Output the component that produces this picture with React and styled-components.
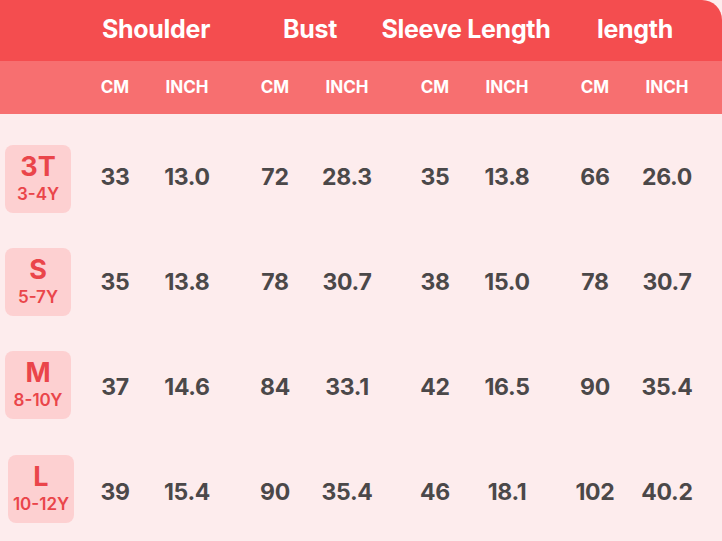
import React from "react";
import styled, { createGlobalStyle } from "styled-components";

const rows = [
  { size: "3T", age: "3-4Y", values: ["33", "13.0", "72", "28.3", "35", "13.8", "66", "26.0"] },
  { size: "S", age: "5-7Y", values: ["35", "13.8", "78", "30.7", "38", "15.0", "78", "30.7"] },
  { size: "M", age: "8-10Y", values: ["37", "14.6", "84", "33.1", "42", "16.5", "90", "35.4"] },
  { size: "L", age: "10-12Y", values: ["39", "15.4", "90", "35.4", "46", "18.1", "102", "40.2"] },
];

// title text sits a little off the group centre in the original
const groups = [
  { name: "Shoulder", nudge: 5 },
  { name: "Bust", nudge: -1 },
  { name: "Sleeve Length", nudge: -5 },
  { name: "length", nudge: 4 },
];

const GlobalStyle = createGlobalStyle`
  html, body {
    margin: 0;
    padding: 0;
    background: #ffffff;
  }
  body {
    font-family: "Inter", "Open Sans", sans-serif;
    overflow: hidden;
  }
`;

const cols = "71px repeat(4, 8px 72px 72px 8px) 11px";

const Chart = styled.div`
  width: 722px;
  height: 541px;
  background: #fdeced;
  overflow: hidden;
`;

const TitleBar = styled.div`
  display: grid;
  grid-template-columns: 71px repeat(4, 160px) 11px;
  height: 61px;
  align-items: center;
  background: #f44d4f;
  border-top-right-radius: 20px;
`;

const Title = styled.div`
  grid-column: ${(p) => p.col};
  justify-self: center;
  white-space: nowrap;
  color: #ffffff;
  font-size: 25px;
  font-weight: 700;
  letter-spacing: -0.3px;
  padding-bottom: 4px;
  padding-left: ${(p) => (p.$nudge > 0 ? p.$nudge * 2 : 0)}px;
  padding-right: ${(p) => (p.$nudge < 0 ? -p.$nudge * 2 : 0)}px;
`;

const UnitBar = styled.div`
  display: grid;
  grid-template-columns: ${cols};
  height: 53px;
  align-items: center;
  background: #f76f70;
`;

const Unit = styled.div`
  grid-column: ${(p) => p.col};
  text-align: center;
  color: #ffffff;
  font-size: 17px;
  font-weight: 700;
  padding-bottom: 2px;
`;

const Body = styled.div`
  padding-top: 10px;
`;

const Row = styled.div`
  display: grid;
  grid-template-columns: ${cols};
  height: 105px;
  align-items: center;
`;

const Badge = styled.div`
  grid-column: 1;
  justify-self: start;
  margin-left: ${(p) => (p.$wide ? "8px" : "5px")};
  margin-top: ${(p) => p.$shift}px;
  min-width: 66px;
  height: 68px;
  box-sizing: border-box;
  padding: 0 3px;
  border-radius: 8px;
  background: #fdd0d1;
  color: #ea454a;
  display: flex;
  flex-direction: column;
  align-items: center;
  justify-content: center;
  font-weight: 700;
`;

const Size = styled.div`
  font-size: 27px;
  line-height: 30px;
`;

const Age = styled.div`
  font-size: 17px;
  line-height: 24px;
  font-weight: 600;
`;

const Value = styled.div`
  grid-column: ${(p) => p.col};
  text-align: center;
  color: #4b4849;
  font-size: 23px;
  font-weight: 700;
  letter-spacing: -0.3px;
`;

const colFor = (i) => 2 + Math.floor(i / 2) * 4 + 1 + (i % 2);

const shifts = [4, 0, -3, -6];

export default function App() {
  return (
    <>
      <GlobalStyle />
      <Chart>
        <TitleBar>
          {groups.map((g, i) => (
            <Title key={g.name} col={i + 2} $nudge={g.nudge}>
              {g.name}
            </Title>
          ))}
        </TitleBar>
        <UnitBar>
          {groups.map((g, i) => (
            <React.Fragment key={g.name}>
              <Unit col={colFor(i * 2)}>CM</Unit>
              <Unit col={colFor(i * 2 + 1)}>INCH</Unit>
            </React.Fragment>
          ))}
        </UnitBar>
        <Body>
          {rows.map((r, ri) => (
            <Row key={r.size}>
              <Badge $shift={shifts[ri]} $wide={r.age.length > 5}>
                <Size>{r.size}</Size>
                <Age>{r.age}</Age>
              </Badge>
              {r.values.map((v, i) => (
                <Value key={i} col={colFor(i)}>
                  {v}
                </Value>
              ))}
            </Row>
          ))}
        </Body>
      </Chart>
    </>
  );
}
